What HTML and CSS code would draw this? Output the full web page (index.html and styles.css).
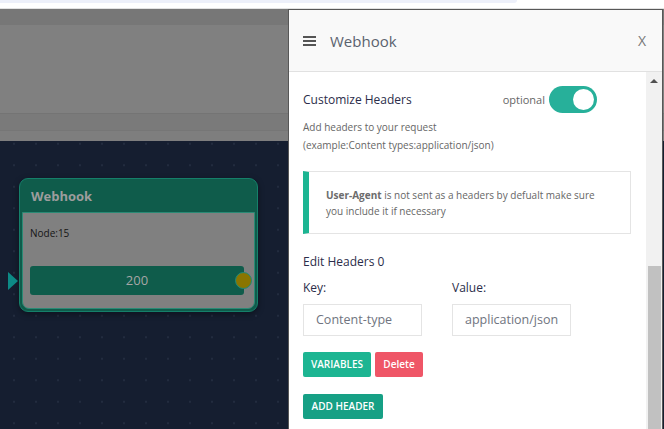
FILE: index.html
```html
<!DOCTYPE html>
<html>
<head>
<meta charset="utf-8">
<link rel="stylesheet" href="styles.css">
</head>
<body>
<div class="topbar"><div class="pill"></div></div>
<div class="stage">
  <div class="band band-a"></div>
  <div class="band band-b"></div>
  <div class="band band-c"></div>
  <div class="band band-d"></div>
  <div class="canvas">
    <div class="node">
      <div class="node-head">Webhook</div>
      <div class="node-body">
        <div class="node-id">Node:15</div>
        <div class="node-out">200<span class="port-out"></span></div>
      </div>
      <span class="port-in"></span>
    </div>
  </div>

  <aside class="panel">
    <header class="panel-head">
      <svg class="burger" width="13" height="10" viewBox="0 0 13 10"><rect x="0" y="0" width="13" height="2" fill="#555"/><rect x="0" y="4" width="13" height="2" fill="#555"/><rect x="0" y="8" width="13" height="2" fill="#555"/></svg>
      <span class="panel-title">Webhook</span>
      <span class="close">X</span>
    </header>
    <div class="panel-main">
      <div class="panel-content">
        <div class="row-toggle">
          <span class="label">Customize Headers</span>
          <span class="opt">optional</span>
          <span class="toggle"><span class="knob"></span></span>
        </div>
        <p class="hint first">Add headers to your request</p>
        <p class="hint">(example:Content types:application/json)</p>
        <div class="callout"><b>User-Agent</b> is not sent as a headers by defualt make sure you include it if necessary</div>
        <div class="label edit">Edit Headers 0</div>
        <div class="kv">
          <div class="field"><div class="label">Key:</div><div class="input">Content-type</div></div>
          <div class="field"><div class="label">Value:</div><div class="input">application/json</div></div>
        </div>
        <div class="btns">
          <span class="btn teal">VARIABLES</span>
          <span class="btn red">Delete</span>
        </div>
        <span class="btn dark">ADD HEADER</span>
      </div>
      <div class="scrollbar">
        <span class="arrow"></span>
        <span class="thumb"></span>
      </div>
    </div>
  </aside>
</div>
</body>
</html>
```

FILE: styles.css
```css
* { box-sizing: border-box; }
html, body { margin: 0; height: 100%; }
body {
  width: 664px; height: 429px; overflow: hidden;
  background: #fff;
  font-family: "Open Sans", "Liberation Sans", sans-serif;
  display: flex; flex-direction: column;
}
.topbar { height: 9px; background: #fff; border-bottom: 1px solid #e2e2e2; }
.pill { width: 517px; height: 3px; background: #edf0fa; border-radius: 0 0 6px 0; }
.stage { position: relative; flex: 1; display: flex; flex-direction: column; }
.band-a { height: 16px; background: #777; }
.band-b { height: 88px; background: #808080; }
.band-c { height: 17px; background: #7a7a7a; border-top: 1px solid #747474; }
.band-d { height: 11px; background: #7e7e7e; border-top: 1px solid #767676; }
.canvas {
  position: relative; flex: 1;
  background-color: #151e30;
  background-image: radial-gradient(circle, #222c3f 1px, transparent 1.2px);
  background-size: 22px 21.5px;
  background-position: 3px -8px;
}
.node {
  position: absolute; left: 19px; top: 37px;
  width: 239px; height: 134px;
  background: #0f5c4b; border: 1px solid #15806a; border-radius: 9px;
  box-shadow: 0 2px 6px rgba(0,0,0,0.4);
  display: flex; flex-direction: column;
}
.node-head {
  height: 33px; padding: 8px 0 0 11px;
  font-size: 13px; font-weight: 700; color: #9d9d9d;
}
.node-body {
  flex: 1; margin: 0 2px 2px; background: #808080;
  border: 1px solid #2a8a75; border-radius: 0 0 7px 7px;
  padding: 13px 10px 0 7px;
}
.node-id { font-size: 10px; color: #151515; line-height: 14px; }
.node-out {
  position: relative; margin-top: 26px; height: 29px;
  background: #0f5c4b; border-radius: 3px;
  color: #a6a6a6; font-size: 13px; line-height: 29px; text-align: center;
}
.port-out {
  position: absolute; right: -8px; top: 6px;
  width: 17px; height: 17px; border-radius: 50%;
  background: #8a7500; border: 1px solid #1e8a7a;
}
.port-in {
  position: absolute; left: -12px; top: 93px;
  width: 0; height: 0;
  border-top: 9px solid transparent; border-bottom: 9px solid transparent;
  border-left: 10px solid #0d8a86;
}

.panel {
  position: absolute; top: 0; right: 1px; bottom: 0; width: 375px;
  background: #fff; border: 1px solid #575757; border-bottom: 0;
  display: flex; flex-direction: column;
}
.panel-head {
  height: 62px; flex: none; background: #f9f9f9;
  border-bottom: 1px solid #e1e1e1;
  display: flex; align-items: center; padding: 0 16px 0 14px;
}
.burger { margin-right: 14px; }
.panel-title { font-size: 15px; color: #5a626e; flex: 1; }
.close { font-size: 14px; color: #777; }
.panel-main { flex: 1; display: flex; min-height: 0; }
.panel-content { flex: 1; padding: 13px 0 0 14px; }
.scrollbar {
  width: 16px; background: #f1f1f1; position: relative;
  display: flex; flex-direction: column; align-items: center;
}
.arrow {
  margin-top: 7px; width: 0; height: 0;
  border-left: 4px solid transparent; border-right: 4px solid transparent;
  border-bottom: 4px solid #505050;
}
.thumb {
  position: absolute; left: 2px; right: 1px; top: 194px; bottom: 0;
  background: #c1c1c1;
}
.label { font-size: 12px; color: #2b2d4a; }
.row-toggle { display: flex; align-items: center; height: 28px; }
.row-toggle .label { flex: 1; }
.opt { font-size: 11px; color: #666; margin-right: 4px; }
.toggle {
  width: 48px; height: 27px; border-radius: 14px; background: #27b09a;
  margin-right: 49px; position: relative;
}
.knob {
  position: absolute; right: 3px; top: 3px; width: 21px; height: 21px;
  border-radius: 50%; background: #fff;
}
.hint { margin: 0; font-size: 10px; color: #666; line-height: 18px; }
.hint.first { margin-top: 5px; }
.callout {
  margin: 17px 15px 0 0; height: 63px;
  border: 1px solid #e4e4e4; border-left: 6px solid #1cb592;
  padding: 16px 20px 0 17px;
  font-size: 10px; line-height: 15.5px; color: #666;
}
.callout b { font-weight: 700; color: #6c6c6c; }
.edit { margin-top: 19px; line-height: 17px; }
.kv { display: flex; gap: 30px; margin-top: 9px; }
.field { width: 119px; }
.field .label { line-height: 17px; }
.input {
  margin-top: 8px; height: 32px; border: 1px solid #e4e4e4;
  font-size: 12.5px; color: #707480; line-height: 30px; padding-left: 12px;
}
.btns { display: flex; gap: 4px; margin-top: 16px; margin-bottom: 16px; }
.btn {
  display: inline-block; height: 25px; line-height: 25px; border-radius: 2px;
  font-size: 10px; font-weight: 600; color: #fff; white-space: nowrap;
  text-align: center;
}
.teal { background: #1db592; width: 68px; }
.red { background: #ef5667; width: 48px; }
.dark { background: #16a085; width: 80px; }
```
